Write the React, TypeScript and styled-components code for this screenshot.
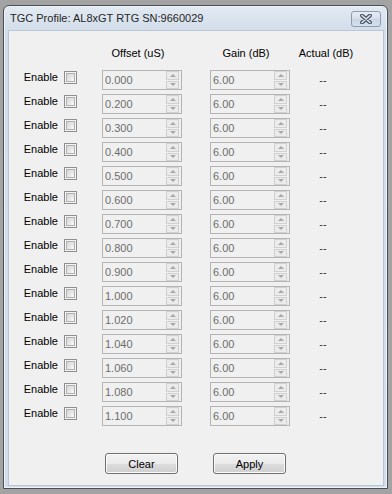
import React from 'react';
import styled, { createGlobalStyle, css } from 'styled-components';

const GlobalStyle = createGlobalStyle`
  html, body {
    margin: 0;
    padding: 0;
    background: #a3a3a3;
    font-family: "Liberation Sans", Arial, sans-serif;
  }
`;

const Desktop = styled.div`
  width: 392px;
  height: 494px;
  box-sizing: border-box;
  padding: 5px 4px 5px 3px;
`;

const Window = styled.div`
  width: 385px;
  height: 484px;
  box-sizing: border-box;
  border: 1px solid #4a4f56;
  border-radius: 6px 6px 0 0;
  background: linear-gradient(#e2eaf3 0px, #d3deea 24px, #d2dde9 100%);
  display: flex;
  flex-direction: column;
  box-shadow: inset 0 0 0 1px #eef3f8;
`;

const TitleBar = styled.div`
  height: 24px;
  display: flex;
  align-items: flex-start;
  justify-content: space-between;
  padding: 0 6px 0 6px;
`;

const Title = styled.span`
  font-size: 11px;
  line-height: 24px;
  color: #262626;
`;

const CloseButton = styled.div`
  width: 30px;
  height: 16px;
  margin-top: 5px;
  box-sizing: border-box;
  border: 1px solid #8d9cb1;
  border-radius: 3px;
  background: linear-gradient(#e6edf5, #d5dfea 50%, #c9d5e3 51%, #d6e0eb);
  display: flex;
  align-items: center;
  justify-content: center;
`;

const Content = styled.div`
  flex: 1;
  margin: 0 3px 2px 4px;
  border: 1px solid #b9c8d9;
  background: #f0f0f0;
  display: flex;
  flex-direction: column;
  font-size: 11px;
  color: #000;
`;

const gridCols = css`
  display: grid;
  grid-template-columns: 55px 38px 108px 80px 66px;
`;

const HeaderRow = styled.div`
  ${gridCols};
  margin-top: 13px;
  height: 18px;
  line-height: 18px;
`;

const HeaderCell = styled.div<{ $col: number; $pad?: number }>`
  grid-column: ${(p) => p.$col};
  width: 72px;
  text-align: center;
  padding-left: ${(p) => p.$pad ?? 0}px;
`;

const Rows = styled.div`
  margin-top: 5px;
  display: flex;
  flex-direction: column;
`;

const Row = styled.div`
  ${gridCols};
  height: 24px;
  align-items: start;
`;

const Label = styled.label`
  line-height: 20px;
  text-align: right;
  padding-right: 6px;
`;

const CheckBox = styled.div`
  margin-top: 4px;
  width: 13px;
  height: 13px;
  box-sizing: border-box;
  border: 1px solid #8e8f8f;
  padding: 1px;
  background: #f4f4f4;
  &::after {
    content: '';
    display: block;
    width: 100%;
    height: 100%;
    box-sizing: border-box;
    border: 1px solid #b2b2b2;
    background: linear-gradient(135deg, #d6d6d6, #f6f6f6);
  }
`;

const Spinner = styled.div`
  margin-top: 3px;
  width: 80px;
  height: 20px;
  box-sizing: border-box;
  border: 1px solid #b4b4b4;
  background: #f0f0f0;
  display: flex;
  align-items: center;
  padding-right: 2px;
`;

const SpinValue = styled.span`
  flex: 1;
  padding-left: 2px;
  color: #6d6d6d;
  font-size: 11px;
  line-height: 18px;
`;

const SpinButtons = styled.div`
  width: 13px;
  height: 18px;
  display: flex;
  flex-direction: column;
  gap: 1px;
`;

const SpinButton = styled.div<{ $down?: boolean }>`
  flex: 1;
  box-sizing: border-box;
  border: 1px solid #d0d0d0;
  background: #ebebeb;
  display: flex;
  align-items: center;
  justify-content: center;
  &::after {
    content: '';
    width: 0;
    height: 0;
    border-left: 3px solid transparent;
    border-right: 3px solid transparent;
    ${(p) =>
      p.$down ? 'border-top: 3px solid #a8a8a8;' : 'border-bottom: 3px solid #a8a8a8;'}
  }
`;

const Actual = styled.div`
  margin-top: 3px;
  line-height: 20px;
  text-align: center;
  color: #333;
`;

const ButtonRow = styled.div`
  display: flex;
  gap: 35px;
  margin-top: 26px;
  padding-left: 96px;
`;

const PushButton = styled.button`
  width: 73px;
  height: 21px;
  box-sizing: border-box;
  border: 1px solid #707070;
  border-radius: 3px;
  background: linear-gradient(#f2f2f2, #ebebeb 50%, #dddddd 51%, #cfcfcf);
  box-shadow: inset 0 0 0 1px #fbfbfb;
  font-family: "Liberation Sans", Arial, sans-serif;
  font-size: 11px;
  color: #000;
  padding: 0;
`;

const offsets = [
  '0.000', '0.200', '0.300', '0.400', '0.500', '0.600', '0.700', '0.800',
  '0.900', '1.000', '1.020', '1.040', '1.060', '1.080', '1.100',
];

const SpinBox = ({ value }: { value: string }) => (
  <Spinner>
    <SpinValue>{value}</SpinValue>
    <SpinButtons>
      <SpinButton />
      <SpinButton $down />
    </SpinButtons>
  </Spinner>
);

const App = () => {
  return (
    <Desktop>
      <GlobalStyle />
      <Window>
        <TitleBar>
          <Title>TGC Profile: AL8xGT RTG SN:9660029</Title>
          <CloseButton>
            <svg width="12" height="10" viewBox="0 0 12 10">
              <path d="M2 1.5 L10 8.5 M10 1.5 L2 8.5" stroke="#4c5868" strokeWidth="4" strokeLinecap="round" />
              <path d="M2 1.5 L10 8.5 M10 1.5 L2 8.5" stroke="#dfe5ec" strokeWidth="1.6" strokeLinecap="round" />
            </svg>
          </CloseButton>
        </TitleBar>
        <Content>
          <HeaderRow>
            <HeaderCell $col={3}>Offset (uS)</HeaderCell>
            <HeaderCell $col={4}>Gain (dB)</HeaderCell>
            <HeaderCell $col={5} $pad={0}>Actual (dB)</HeaderCell>
          </HeaderRow>
          <Rows>
            {offsets.map((o) => (
              <Row key={o}>
                <Label>Enable</Label>
                <CheckBox />
                <SpinBox value={o} />
                <SpinBox value="6.00" />
                <Actual>--</Actual>
              </Row>
            ))}
          </Rows>
          <ButtonRow>
            <PushButton>Clear</PushButton>
            <PushButton>Apply</PushButton>
          </ButtonRow>
        </Content>
      </Window>
    </Desktop>
  );
};

export default App;
